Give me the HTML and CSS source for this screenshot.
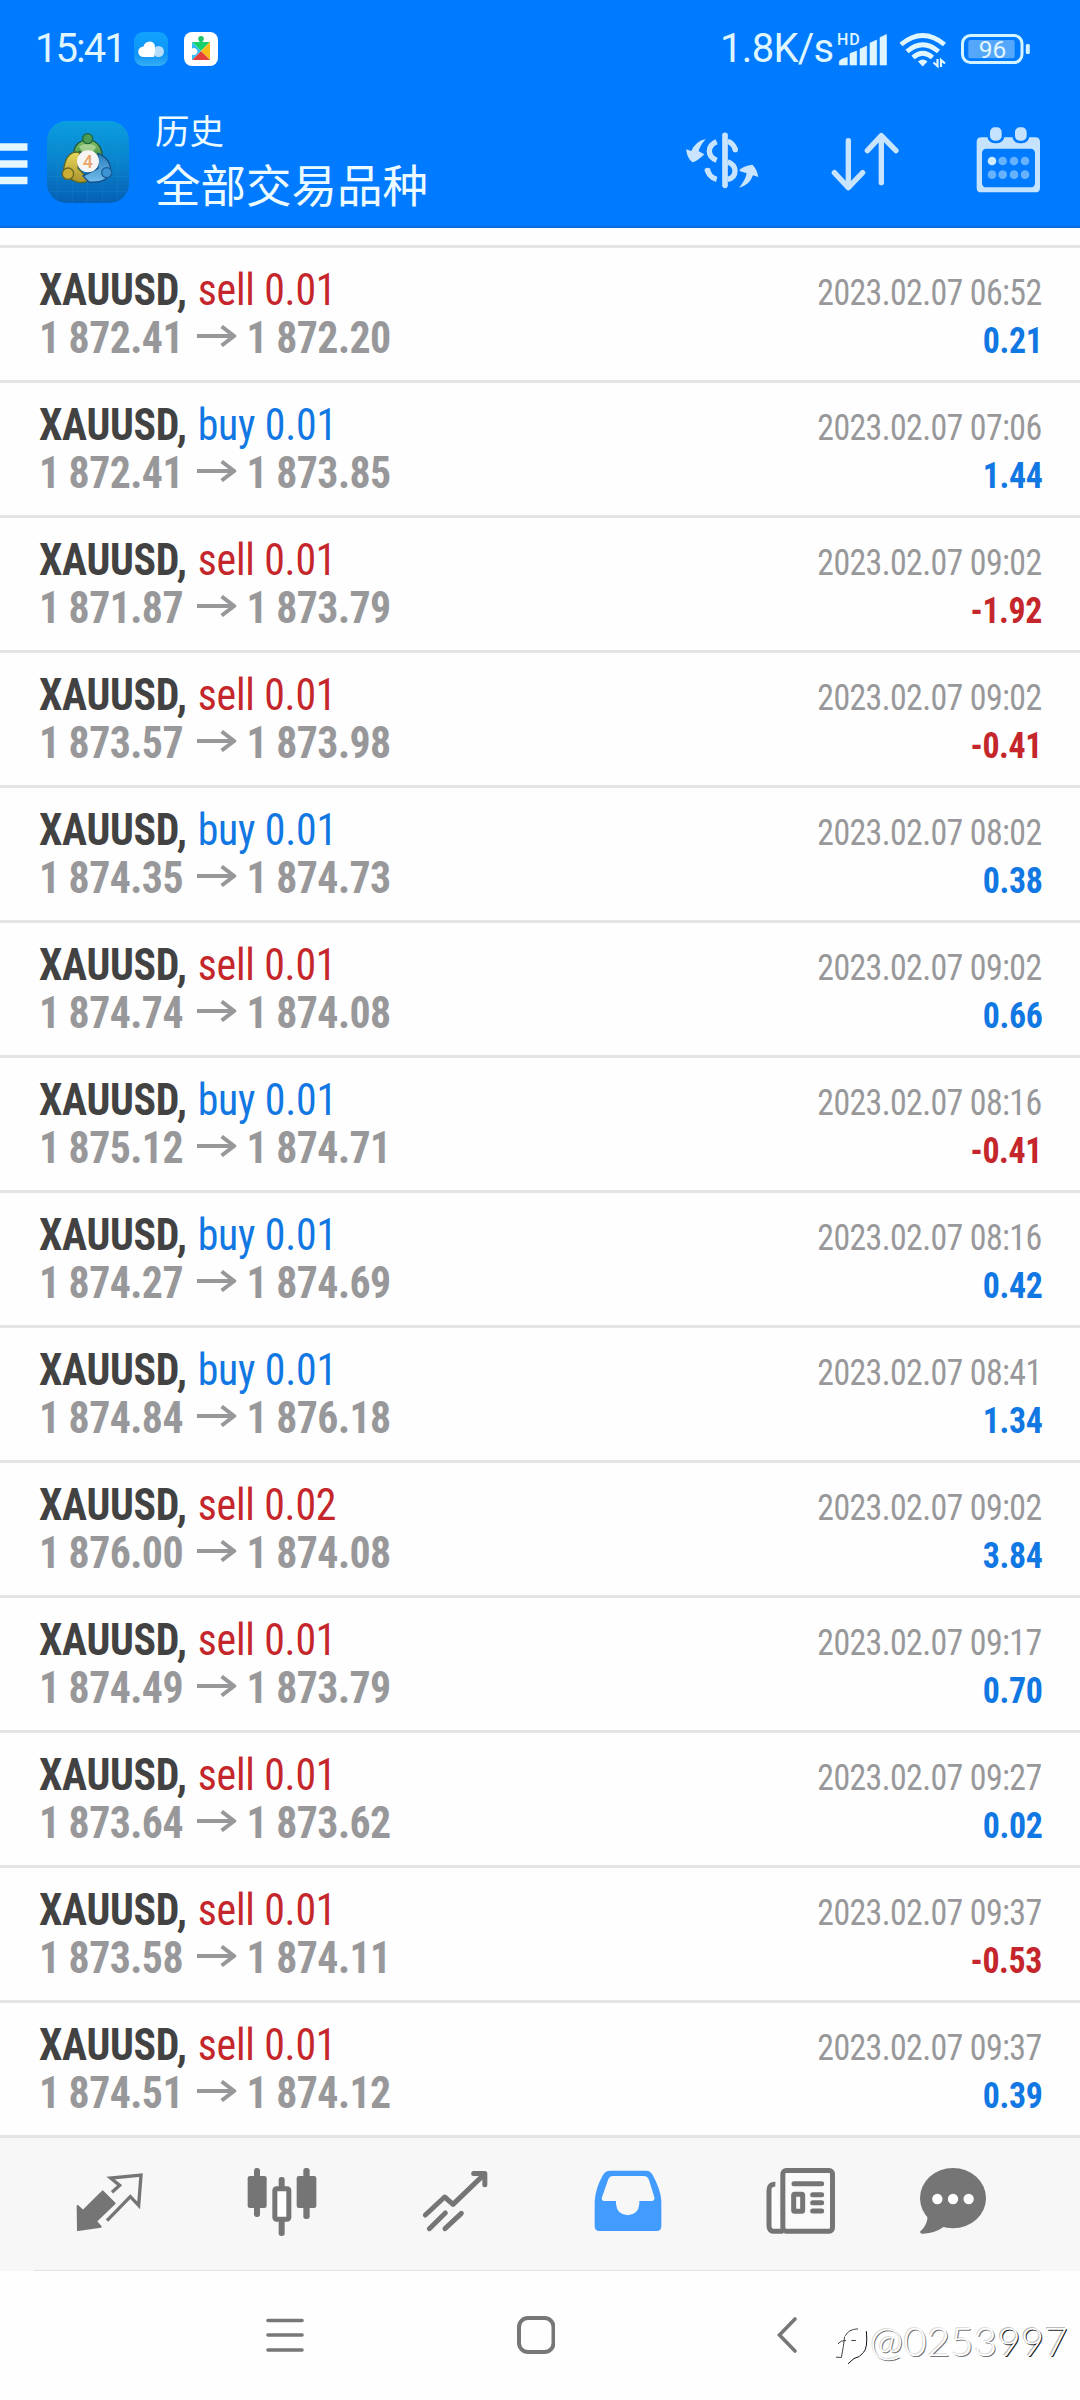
FILE: index.html
```
<!DOCTYPE html>
<html lang="zh-CN">
<head>
<meta charset="utf-8">
<title>历史</title>
<link rel="stylesheet" href="styles.css">
</head>
<body>
<div class="top">
  <div class="status">
    <span class="clock">15:41</span>
    <svg class="app-badge" viewBox="0 0 34 34"><defs><linearGradient id="cl" x1="0" y1="0" x2="0" y2="1"><stop offset="0" stop-color="#12a3ff"/><stop offset=".65" stop-color="#0d93f5"/><stop offset="1" stop-color="#35aef5"/></linearGradient></defs><rect width="34" height="34" rx="9" fill="url(#cl)"/><circle cx="24.500" cy="19.500" r="5.500" fill="#b5ddfa"/><path d="M9.500 25a5.300 5.300 0 0 1 0-10.600A6 6 0 0 1 20.800 13Q22 19 20 25Z" fill="#fff"/></svg>
    <svg class="app-badge" viewBox="0 0 34 34"><rect width="34" height="34" rx="8" fill="#fff"/><circle cx="17" cy="6.800" r="2.800" fill="#1fc46a"/><path d="M15.500 8h3v4h-3z" fill="#1fc46a"/><path d="M8 10H26L17 19Z" fill="#18d06c"/><path d="M26 10V28L17 19Z" fill="#fbbc1a"/><path d="M8 28H26L17 19Z" fill="#e3403c"/><path d="M8 10L17 19L8 28V22.500a3.500 3.500 0 1 0 0-6Z" fill="#31bdf3"/><circle cx="10" cy="19.500" r="2.600" fill="#fff"/></svg>
    <span class="speed">1.8K/s</span>
    <svg class="signal" viewBox="836 28 52 40"><g fill="#dff6ff"><text x="837" y="43.500" class="hd">HD</text><path d="M839.300 64V60Q842 57 847.300 56.500V64ZM850 64V52.500L856.700 50V64ZM860 64V48L866.700 45V64ZM870 64V42L876.700 39V64ZM880 64V36.500L886.500 33.500V64Z" stroke="#dff6ff" stroke-linejoin="round" stroke-width=".6"/></g></svg>
    <svg class="wifi" viewBox="898 28 50 40"><g fill="none" stroke="#dff6ff" stroke-width="4.800"><path d="M901 43.500Q922.700 25.500 944.500 43.500"/><path d="M907 50.500Q922.700 37 938.500 50.500"/><path d="M913 56.500Q922.700 48 932.500 56.500"/></g><path d="M918 60.500Q922.700 56.500 927.500 60.500L922.700 65.500Z" fill="#dff6ff"/><path d="M937.500 58V65L933.500 61.500M941 66V59L945 62.500" fill="none" stroke="#dff6ff" stroke-width="2.200"/></svg>
    <svg class="battery" viewBox="960 28 72 40"><rect x="962.500" y="34.500" width="59.500" height="27" rx="8" fill="none" stroke="#d4f5ff" stroke-width="3"/><rect x="968.300" y="39" width="46.400" height="18.300" rx="2" fill="#55a7fb"/><rect x="1025.800" y="43" width="4" height="10" rx="1.500" fill="#d4f5ff"/><text x="992.500" y="56.700" text-anchor="middle" class="charge">96</text></svg>
  </div>
  <header class="bar">
    <svg class="menu" viewBox="0 0 28 42"><path d="M0 4H27.500M0 21H27.500M0 37.500H27.500" stroke="#e4f6ff" stroke-width="7.500"/></svg>
    <svg class="logo" viewBox="52 63 246 246">
      <defs>
        <linearGradient id="bg" x1="0" y1="0" x2="0" y2="1"><stop offset="0" stop-color="#0a9ee0"/><stop offset=".5" stop-color="#0a83cc"/><stop offset="1" stop-color="#0560b4"/></linearGradient>
        <linearGradient id="gr" x1="0" y1="0" x2="0" y2="1"><stop offset="0" stop-color="#8cc66a"/><stop offset="1" stop-color="#257a3a"/></linearGradient>
        <linearGradient id="ye" x1="0" y1="0" x2="0" y2="1"><stop offset="0" stop-color="#e9d95c"/><stop offset="1" stop-color="#a9922b"/></linearGradient>
        <linearGradient id="bl" x1="0" y1="0" x2="0" y2="1"><stop offset="0" stop-color="#2a7dbd"/><stop offset="1" stop-color="#73bdec"/></linearGradient>
      </defs>
      <rect x="52" y="63" width="246" height="246" rx="58" fill="url(#bg)"/>
      <path d="M84 70V302M129 64V308M173 64V308M218 64V308M263 70V302M58 96H292M53 141H297M53 185H297M53 229H297M58 274H292" stroke="#2fa4e2" stroke-opacity=".25" stroke-width="2"/>
      <g stroke-width="4">
        <path d="M132 170Q128 126 174 118Q222 126 218 182L200 190L150 155Z" fill="url(#gr)" stroke="#1e5a3c"/>
        <path d="M150 158Q112 148 102 205L120 235Q150 258 180 240L145 205Z" fill="url(#ye)" stroke="#54652c"/>
        <path d="M205 160Q246 178 242 215Q232 252 178 246L160 228L205 205Z" fill="url(#bl)" stroke="#154f86"/>
        <path d="M148 140Q174 122 200 140L190 156H158Z" fill="#c9e6b0" stroke="none" opacity=".6"/>
        <circle cx="174" cy="116" r="15" fill="#4c9d55" stroke="#24663a"/>
        <circle cx="115" cy="221" r="17" fill="#c9ad35" stroke="#6b6528"/>
        <circle cx="231" cy="218" r="15" fill="#3d94d4" stroke="#195c98"/>
      </g>
      <circle cx="175" cy="184" r="33" fill="#f6f5f3"/>
      <text x="175" y="204" text-anchor="middle" class="four">4</text>
    </svg>
    <div class="titles"><div class="small">历史</div><div class="big">全部交易品种</div></div>
    <svg class="act-currency" viewBox="12 24 228 198"><g fill="none" stroke="#c9e4fe" stroke-width="16"><path d="M135 46V196" stroke-width="17" stroke-linecap="round"/><path d="M110 65Q88 74 88 93Q88 112 110 121"/><path d="M82 146Q86 172 110 178"/><path d="M143 64Q160 70 166 89" /><path d="M143 125Q165 134 165 152Q165 173 143 178"/></g><circle cx="166" cy="89" r="8" fill="#c9e4fe"/><circle cx="82" cy="151" r="8" fill="#c9e4fe"/><path d="M77 57Q58 80 56 94L73 103Q52 124 37 127Q22 116 18 88L34 93Q46 64 77 57ZM177 203Q196 182 200 160L178 153L181 147Q200 135 217 134Q230 145 235 171L219 166Q208 197 177 203Z" fill="#c9e4fe"/></svg>
    <svg class="act-sort" viewBox="450 24 210 198"><path d="M505 62V202M463 158L505 203L548 158M604 188V48M562 92L604 47L648 92" fill="none" stroke="#c9e4fe" stroke-width="16" stroke-linecap="round" stroke-linejoin="round"/></svg>
    <svg class="act-calendar" viewBox="888 20 195 204"><path fill-rule="evenodd" d="M904 54H1066Q1080 54 1080 68V205Q1080 219 1066 219H904Q890 219 890 205V68Q890 54 904 54ZM920 88Q906 88 906 102V190Q906 204 920 204H1051Q1065 204 1065 190V102Q1065 88 1051 88Z" fill="#c5e3fd"/><g fill="#c5e3fd" stroke="#007aff" stroke-width="8"><rect x="926" y="20" width="43" height="48" rx="18"/><rect x="1001" y="20" width="43" height="48" rx="18"/></g><g fill="#66b2ff"><circle cx="936" cy="125" r="13" fill="#cfecff"/><circle cx="968" cy="125" r="13"/><circle cx="1002" cy="125" r="13"/><circle cx="1035" cy="125" r="13"/><circle cx="936" cy="166" r="13"/><circle cx="968" cy="166" r="13"/><circle cx="1002" cy="166" r="13"/><circle cx="1035" cy="166" r="13"/></g></svg>
  </header>
</div>

<svg class="defs"><symbol id="arrow" viewBox="0 0 40 22" preserveAspectRatio="none"><path d="M0 11H37M25 1.500L37.500 11L25 20.500" fill="none" stroke="#98989a" stroke-width="4"/></symbol></svg>

<main class="deals">
  <div class="deal"><div class="line"><div class="name"><b>XAUUSD,</b><span class="sell">sell 0.01</span></div><div class="date">2023.02.07 06:52</div></div><div class="line"><div class="price">1 872.41<svg><use href="#arrow"/></svg>1 872.20</div><div class="gain">0.21</div></div></div>
  <div class="deal"><div class="line"><div class="name"><b>XAUUSD,</b><span class="buy">buy 0.01</span></div><div class="date">2023.02.07 07:06</div></div><div class="line"><div class="price">1 872.41<svg><use href="#arrow"/></svg>1 873.85</div><div class="gain">1.44</div></div></div>
  <div class="deal"><div class="line"><div class="name"><b>XAUUSD,</b><span class="sell">sell 0.01</span></div><div class="date">2023.02.07 09:02</div></div><div class="line"><div class="price">1 871.87<svg><use href="#arrow"/></svg>1 873.79</div><div class="gain loss">-1.92</div></div></div>
  <div class="deal"><div class="line"><div class="name"><b>XAUUSD,</b><span class="sell">sell 0.01</span></div><div class="date">2023.02.07 09:02</div></div><div class="line"><div class="price">1 873.57<svg><use href="#arrow"/></svg>1 873.98</div><div class="gain loss">-0.41</div></div></div>
  <div class="deal"><div class="line"><div class="name"><b>XAUUSD,</b><span class="buy">buy 0.01</span></div><div class="date">2023.02.07 08:02</div></div><div class="line"><div class="price">1 874.35<svg><use href="#arrow"/></svg>1 874.73</div><div class="gain">0.38</div></div></div>
  <div class="deal"><div class="line"><div class="name"><b>XAUUSD,</b><span class="sell">sell 0.01</span></div><div class="date">2023.02.07 09:02</div></div><div class="line"><div class="price">1 874.74<svg><use href="#arrow"/></svg>1 874.08</div><div class="gain">0.66</div></div></div>
  <div class="deal"><div class="line"><div class="name"><b>XAUUSD,</b><span class="buy">buy 0.01</span></div><div class="date">2023.02.07 08:16</div></div><div class="line"><div class="price">1 875.12<svg><use href="#arrow"/></svg>1 874.71</div><div class="gain loss">-0.41</div></div></div>
  <div class="deal"><div class="line"><div class="name"><b>XAUUSD,</b><span class="buy">buy 0.01</span></div><div class="date">2023.02.07 08:16</div></div><div class="line"><div class="price">1 874.27<svg><use href="#arrow"/></svg>1 874.69</div><div class="gain">0.42</div></div></div>
  <div class="deal"><div class="line"><div class="name"><b>XAUUSD,</b><span class="buy">buy 0.01</span></div><div class="date">2023.02.07 08:41</div></div><div class="line"><div class="price">1 874.84<svg><use href="#arrow"/></svg>1 876.18</div><div class="gain">1.34</div></div></div>
  <div class="deal"><div class="line"><div class="name"><b>XAUUSD,</b><span class="sell">sell 0.02</span></div><div class="date">2023.02.07 09:02</div></div><div class="line"><div class="price">1 876.00<svg><use href="#arrow"/></svg>1 874.08</div><div class="gain">3.84</div></div></div>
  <div class="deal"><div class="line"><div class="name"><b>XAUUSD,</b><span class="sell">sell 0.01</span></div><div class="date">2023.02.07 09:17</div></div><div class="line"><div class="price">1 874.49<svg><use href="#arrow"/></svg>1 873.79</div><div class="gain">0.70</div></div></div>
  <div class="deal"><div class="line"><div class="name"><b>XAUUSD,</b><span class="sell">sell 0.01</span></div><div class="date">2023.02.07 09:27</div></div><div class="line"><div class="price">1 873.64<svg><use href="#arrow"/></svg>1 873.62</div><div class="gain">0.02</div></div></div>
  <div class="deal"><div class="line"><div class="name"><b>XAUUSD,</b><span class="sell">sell 0.01</span></div><div class="date">2023.02.07 09:37</div></div><div class="line"><div class="price">1 873.58<svg><use href="#arrow"/></svg>1 874.11</div><div class="gain loss">-0.53</div></div></div>
  <div class="deal"><div class="line"><div class="name"><b>XAUUSD,</b><span class="sell">sell 0.01</span></div><div class="date">2023.02.07 09:37</div></div><div class="line"><div class="price">1 874.51<svg><use href="#arrow"/></svg>1 874.12</div><div class="gain">0.39</div></div></div>
</main>

<nav class="tabs">
  <div class="tab"><svg viewBox="25 0 240 240"><path d="M51 138L67 153L126 94L162 130L106 184L120 200L52 210Z" fill="#757575" stroke="#757575" stroke-width="6" stroke-linejoin="round"/><path d="M154 97L177 76L150 54L241 45L234 136L209 110L139 182" fill="none" stroke="#757575" stroke-width="10"/></svg></div>
  <div class="tab"><svg viewBox="544 0 240 240"><g fill="#757575"><rect x="561" y="48" width="57" height="96" rx="7"/><rect x="580" y="24" width="18" height="147" rx="8"/><rect x="708" y="48" width="59" height="96" rx="7"/><rect x="728" y="24" width="19" height="153" rx="8"/><rect x="654" y="51" width="18" height="40" rx="8"/><rect x="654" y="170" width="18" height="58" rx="8"/></g><rect x="642.500" y="86.500" width="42" height="91" rx="5" fill="#fff" stroke="#757575" stroke-width="15"/></svg></div>
  <div class="tab"><svg viewBox="1063 0 240 240"><g fill="none" stroke="#757575" stroke-width="15" stroke-linecap="round" stroke-linejoin="round"><path d="M1094 165L1152 111L1177 133L1270 44"/><path d="M1239 40.500H1272.500V74"/><path d="M1106 206L1154 159M1153 206L1202 160"/></g></svg></div>
  <div class="tab"><svg viewBox="23 0 240 240"><path fill-rule="evenodd" d="M90 32H197Q210 32 217 45Q242 90 243 125V199Q243 213 229 213H57Q43 213 43 199V125Q45 85 68 45Q75 32 90 32ZM98 48Q87 48 83 60L65 112Q62 123 72 123H107V132Q110 164 142 166Q174 164 177 132V123H214Q224 123 222 112L206 60Q202 48 190 48Z" fill="#429bfe"/></svg></div>
  <div class="tab"><svg viewBox="544 0 240 240"><g fill="none" stroke="#757575" stroke-width="15" stroke-linecap="round"><path d="M587 73Q568 72 568 90V197Q568 214 585 214H610" fill="#fcfcfc" stroke-linecap="butt"/><rect x="609.500" y="31.500" width="149" height="182" rx="10" fill="#fafafa"/><path d="M643 71H726M699 104H726M699 128H726M699 153H726"/><rect x="642" y="103" width="27" height="51" rx="3"/></g></svg></div>
  <div class="tab last"><svg viewBox="999 0 240 240"><path d="M1043 165Q1043 197 1020 215Q1020 222 1030 221Q1065 219 1092 200Z" fill="#757575"/><ellipse cx="1119" cy="114.500" rx="99" ry="90.500" fill="#757575"/><g fill="#fff"><circle cx="1072" cy="117" r="15.500"/><circle cx="1119" cy="117" r="15.500"/><circle cx="1166" cy="117" r="15.500"/></g></svg></div>
</nav>

<footer class="sysnav">
  <svg class="recent" viewBox="0 0 38 40"><path d="M2 5.500H36M2 20H36M2 35H36" stroke="#777" stroke-width="3.600" stroke-linecap="round"/></svg>
  <svg class="home" viewBox="0 0 38 40"><rect x="2" y="3" width="34.500" height="34" rx="9" fill="none" stroke="#777" stroke-width="4"/></svg>
  <svg class="back" viewBox="0 0 22 40"><path d="M19 4L3.500 20L19 36" fill="none" stroke="#777" stroke-width="3.600" stroke-linecap="round"/></svg>
  <div class="mark"><svg viewBox="12 45 108 125"><g fill="none" stroke="#444" stroke-width="3"><path d="M46 80Q55 60 84 59"/><path d="M109 66Q114 118 100 130Q90 145 72 148L54 164" stroke="#111"/><path d="M24 104L34 96L48 94M44 82L40 112L34 145L18 144M64 94H78"/></g></svg><span>@0253<i>997</i></span></div>
</footer>
</body>
</html>
```
FILE: styles.css
```
* { box-sizing: border-box; }
body {
  margin: 0;
  width: 1080px;
  height: 2400px;
  background: #fefefe;
  font-family: Roboto, "Noto Sans CJK SC", sans-serif;
  overflow: hidden;
}
svg { display: block; flex: none; }
.defs { width: 0; height: 0; position: absolute; }

.top { background: #007aff; height: 228px; border-bottom: 2px solid #0a6bdc; }
.status { display: flex; align-items: center; height: 97px; padding-left: 35px; color: #dff6ff; font-size: 40px; line-height: 97px; }
.clock { width: 99px; letter-spacing: -2px; }
.app-badge { width: 34px; height: 34px; margin-right: 16px; }
.speed { margin-left: 486px; width: 116px; letter-spacing: -.7px; white-space: nowrap; }
.signal { width: 52px; height: 40px; }
.wifi { width: 50px; height: 40px; margin-left: 10px; }
.battery { width: 72px; height: 40px; margin-left: 12px; }
.hd { font-size: 16px; font-weight: 500; letter-spacing: .8px; }
.charge { font-size: 24.500px; fill: #e0f6ff; font-weight: 400; }

.bar { display: flex; align-items: flex-start; height: 130px; }
.menu { width: 28px; height: 42px; margin-top: 46px; }
.logo { width: 82px; height: 82px; margin: 24px 0 0 19px; }
.four { font-size: 54px; font-weight: 500; fill: #e8a56c; }
.titles { margin: 10px 0 0 26px; width: 529px; color: #ecfbff; font-weight: 400; white-space: nowrap; font-family: "Noto Sans CJK SC", sans-serif; }
.small { font-size: 34.500px; line-height: 44px; }
.big { font-size: 45.500px; line-height: 65px; }
.act-currency { width: 76px; height: 66px; margin-top: 31px; }
.act-sort { width: 70px; height: 66px; margin: 31px 0 0 70px; }
.act-calendar { width: 65px; height: 68px; margin: 29px 0 0 76px; }

.deals { padding-top: 17px; font-stretch: 75%; }
.deal { height: 135px; border-top: 3px solid #e4e4e4; padding: 18px 38px 0 39px; }
.line { display: flex; justify-content: space-between; align-items: baseline; height: 48px; line-height: 48px; }
.name, .price { display: flex; align-items: baseline; font-size: 44px; white-space: nowrap; transform: scaleX(.95); transform-origin: 0 0; }
.name { letter-spacing: -.2px; }
.name b { color: #424242; width: 167px; letter-spacing: -.3px; }
.sell { color: #c4262b; }
.buy { color: #1177e2; }
.price { font-weight: 700; letter-spacing: -.6px; color: #98989a; }
.price svg { width: 42px; height: 22px; margin: 0 11px 0 14px; transform: translateY(-6px); }
.date, .gain { font-size: 36px; transform: scaleX(.94); transform-origin: 100% 0; }
.date { letter-spacing: -.65px; color: #98989a; }
.gain { font-weight: 700; letter-spacing: -.4px; color: #1177e2; }
.gain.loss { color: #c4262b; }

.tabs { display: flex; height: 136px; border-top: 3px solid #e4e4e4; background: linear-gradient(#e2e2e2, #e2e2e2) 34px 132px / 1006px 1px no-repeat #f7f7f7; padding: 22px 0 0 22px; }
.tab { width: 173px; display: flex; justify-content: center; }
.last { width: 132px; }
.tab svg { width: 80px; height: 80px; }

.sysnav { display: flex; padding-top: 44px; }
.recent { width: 38px; height: 40px; margin-left: 266px; }
.home { width: 38px; height: 40px; margin-left: 213px; }
.back { width: 22px; height: 40px; margin-left: 221px; }
.mark { display: flex; margin-left: 36px; height: 48px; color: #fff; font: 300 40px/48px Lato, sans-serif; text-shadow: 1px 1px 0 #777, -1px -1px 0 #ddd; }
.mark svg { width: 36px; height: 42px; margin: 9px 0 0 0; }
.mark span { padding-top: 2px; letter-spacing: .3px; }
.mark i { font-style: normal; text-shadow: 1px 1px 0 #222, -1px -1px 0 #bbb; }
```
